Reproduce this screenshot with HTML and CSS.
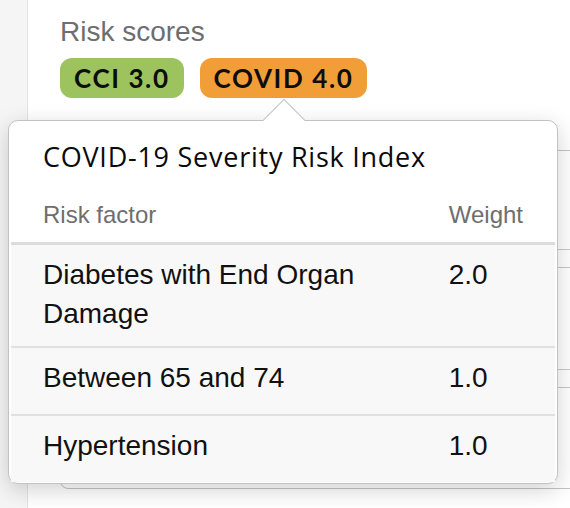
FILE: index.html
```html
<!DOCTYPE html>
<html lang="en">
<head>
<meta charset="utf-8">
<title>Risk scores</title>
<link rel="stylesheet" href="styles.css">
</head>
<body>
<div class="app">
  <aside class="sidebar"></aside>
  <main class="main">
    <h2 class="section-label">Risk scores</h2>
    <div class="badges">
      <span class="badge badge-cci">CCI 3.0</span>
      <span class="badge badge-covid">COVID 4.0</span>
    </div>
    <div class="card">
      <div class="card-row card-row-tall"></div>
      <div class="card-row card-row-thin"></div>
      <div class="card-row card-row-tall2"></div>
      <div class="card-row card-row-thin"></div>
      <div class="card-row card-row-last"></div>
    </div>
  </main>
  <div class="popover">
    <h3 class="popover-title">COVID-19 Severity Risk Index</h3>
    <table class="risk-table">
      <thead>
        <tr><th class="col-factor">Risk factor</th><th class="col-weight">Weight</th></tr>
      </thead>
      <tbody>
        <tr><td>Diabetes with End Organ Damage</td><td class="col-weight">2.0</td></tr>
        <tr><td>Between 65 and 74</td><td class="col-weight">1.0</td></tr>
        <tr><td>Hypertension</td><td class="col-weight">1.0</td></tr>
      </tbody>
    </table>
  </div>
</div>
</body>
</html>
```
FILE: styles.css
```css
* { box-sizing: border-box; }
html, body { margin: 0; padding: 0; background: #fff; }
body { font-family: "Liberation Sans", Arial, sans-serif; }

.app {
  position: relative;
  width: 570px;
  height: 508px;
  overflow: hidden;
  display: flex;
}

.sidebar {
  width: 28px;
  flex: none;
  background: #f5f5f5;
  border-right: 1px solid #e3e3e3;
}

.main {
  flex: 1;
  padding: 16px 0 0 32px;
}

.section-label {
  margin: 0;
  font-weight: normal;
  font-size: 28px;
  line-height: 32px;
  color: #6e6e6e;
}

.badges {
  display: flex;
  gap: 16px;
  margin-top: 10px;
}

.badge {
  height: 40px;
  line-height: 40px;
  padding: 0 14px;
  border-radius: 12px;
  font-family: Lato, "Open Sans", sans-serif;
  font-weight: bold;
  font-size: 26px;
  letter-spacing: 1.6px;
  color: #0d0d0d;
}
.badge-cci { background: #9cc35e; }
.badge-covid { background: #f29e38; }

.card {
  margin-top: 52px;
  margin-right: -20px;
  border: 1px solid #c4c4c4;
  border-radius: 8px;
}
.card-row { border-bottom: 1px solid #c8c8c8; }
.card-row-tall { height: 99px; }
.card-row-thin { height: 18px; }
.card-row-tall2 { height: 102px; }
.card-row-last { height: 100px; border-bottom: none; }

.popover {
  position: absolute;
  left: 8px;
  top: 120px;
  width: 550px;
  height: 364px;
  padding: 0 2px;
  background: #fff;
  border: 1px solid #c2c2c2;
  border-radius: 10px;
  box-shadow: 0 6px 22px rgba(0, 0, 0, 0.18);
}
.popover::before {
  content: "";
  position: absolute;
  left: 259.5px;
  top: -16px;
  width: 29px;
  height: 29px;
  background: #fff;
  border-top: 1px solid #c2c2c2;
  border-left: 1px solid #c2c2c2;
  transform: rotate(45deg);
}

.popover-title {
  margin: 0;
  padding: 19px 32px 0;
  font-family: "Open Sans", Lato, sans-serif;
  font-weight: 500;
  font-size: 27px;
  letter-spacing: 0.75px;
  line-height: 34px;
  color: #0a0a0a;
}

.risk-table {
  width: 100%;
  border-collapse: collapse;
  margin-top: 26px;
}
.risk-table th {
  text-align: left;
  font-weight: normal;
  font-size: 24px;
  line-height: 30px;
  color: #6e6e6e;
  padding: 0 32px 12px;
  border-bottom: 3px solid #dcdcdc;
}
.risk-table td {
  background: #f8f8f8;
  font-size: 28px;
  line-height: 39px;
  color: #111;
  padding: 10px 32px 17px;
  vertical-align: top;
  border-bottom: 2px solid #e0e0e0;
}
.risk-table tbody tr:first-child td { padding-bottom: 13px; }
.risk-table tbody tr:last-child td { border-bottom: none; }
.risk-table .col-weight { width: 1px; white-space: nowrap; }
```
